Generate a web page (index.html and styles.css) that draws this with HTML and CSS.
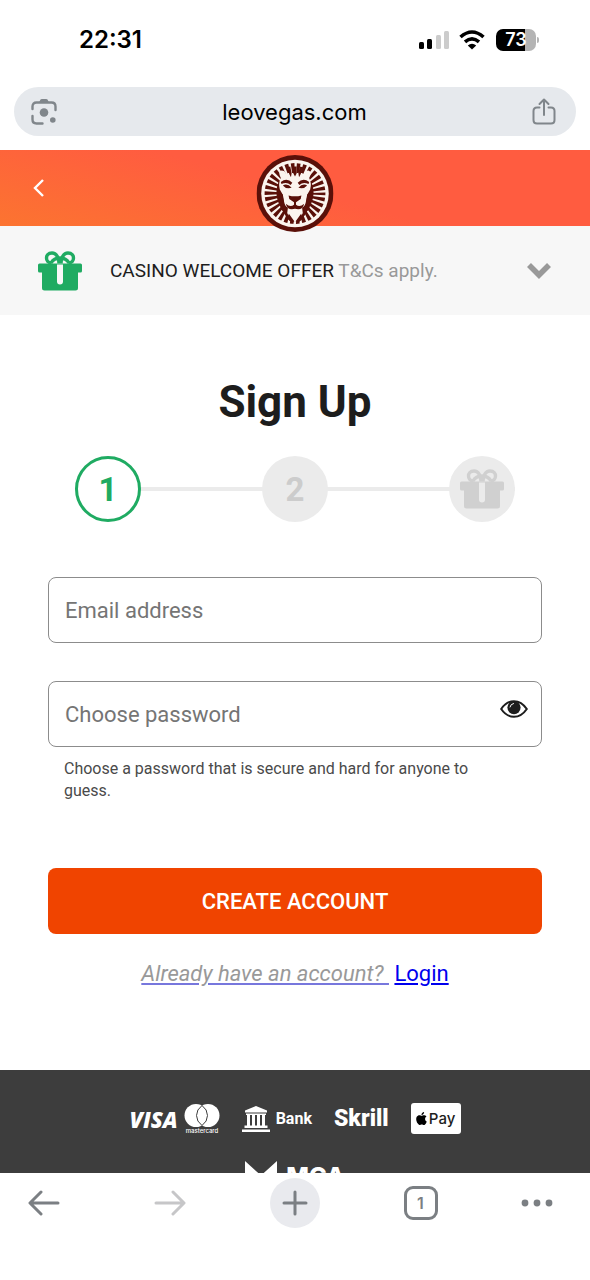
FILE: index.html
```html
<!DOCTYPE html>
<html lang="en">
<head>
    <meta charset="UTF-8">
    <meta name="viewport" content="width=device-width, initial-scale=1.0">
    <title>Sign Up</title>
    <link rel="stylesheet" href="styles.css">
</head>
<body>
    <!-- Shared gift icon -->
    <svg class="defs" aria-hidden="true">
        <symbol id="gift" viewBox="0 0 44 40">
            <path fill-rule="evenodd" d="M1.500 12.500H42.500Q44 12.500 44 14V20Q44 21.500 42.500 21.500H40V37Q40 39.500 37.500 39.500H6.500Q4 39.500 4 37V21.500H1.500Q0 21.500 0 20V14Q0 12.500 1.500 12.500ZM19 13.500V30.500Q19 33.500 22 33.500T25 30.500V13.500Z"/>
            <path fill="none" stroke="currentColor" stroke-width="3.400" d="M21 12.500C21 7 18.500 2 14 2C10 2 8.500 4.500 8.500 7C8.500 9.500 10 12 13.500 12M13 12C15 8.500 17.500 7 22 7C26.500 7 29 8.500 31 12M23 12.500C23 7 25.500 2 30 2C34 2 35.500 4.500 35.500 7C35.500 9.500 34 12 30.500 12"/>
        </symbol>
    </svg>

    <div class="status-bar">
        <span class="time">22:31</span>
        <div class="status-icons">
            <svg width="30" height="20" viewBox="0 0 30 20" aria-hidden="true">
                <rect x="0" y="12" width="5" height="7" rx="1.500"/>
                <rect x="8" y="9" width="5" height="10" rx="1.500"/>
                <rect x="17" y="5" width="5" height="14" rx="1.500" fill="#ccc"/>
                <rect x="25" y="1" width="5" height="18" rx="1.500" fill="#ccc"/>
            </svg>
            <svg width="26" height="20" viewBox="0 0 26 20" aria-hidden="true">
                <g fill="none" stroke="#000" stroke-width="3.600">
                    <path d="M1.500 7Q13-3 24.500 7"/>
                    <path d="M6 11.800Q13 5.800 20 11.800"/>
                </g>
                <path d="M13 19.500L8.800 15.400Q13 12 17.200 15.400Z"/>
            </svg>
            <span class="battery">73</span>
        </div>
    </div>

    <div class="address-bar">
        <button type="button" class="icon-btn" aria-label="Search with camera">
            <svg width="26" height="27" viewBox="0 0 26 27" aria-hidden="true">
                <g fill="none" stroke="#80868b" stroke-width="2.400" stroke-linecap="round">
                    <path d="M1.500 11V8.500Q1.500 4.500 5.500 4.500H20.500Q24.500 4.500 24.500 8.500V12"/>
                    <path d="M1.500 18V21.500Q1.500 25.500 5.500 25.500H11.500"/>
                </g>
                <path fill="#80868b" d="M8 4.500L9.500 1.500Q10 1 10.800 1H15.200Q16 1 16.500 1.500L18 4.500Z"/>
                <circle cx="13" cy="14.500" r="4.300" fill="#80868b"/>
                <circle cx="21.800" cy="22" r="2.800" fill="#80868b"/>
            </svg>
        </button>
        <span class="url">leovegas.com</span>
        <button type="button" class="icon-btn" aria-label="Share">
            <svg width="24" height="27" viewBox="0 0 24 27" aria-hidden="true">
                <g fill="none" stroke="#80868b" stroke-width="2" stroke-linecap="round" stroke-linejoin="round">
                    <path d="M7.500 9.500H5Q1.500 9.500 1.500 13V22Q1.500 25.500 5 25.500H19Q22.500 25.500 22.500 22V13Q22.500 9.500 19 9.500H16.500"/>
                    <path d="M12 17V1.500M7.500 6L12 1.500L16.500 6"/>
                </g>
            </svg>
        </button>
    </div>

    <div class="page">
        <header class="site-header">
            <a href="#" class="back" aria-label="Back">
                <svg width="12" height="20" viewBox="0 0 12 20" aria-hidden="true">
                    <path d="M10 2L2 10L10 18" fill="none" stroke="#fff" stroke-width="2.400"/>
                </svg>
            </a>
            <svg class="logo" viewBox="6 6 228 228" role="img" aria-label="LeoVegas">
                <circle cx="120" cy="120" r="114" fill="#5a1009"/>
                <circle cx="120" cy="120" r="100" fill="#fbf4ee"/>
                <circle cx="120" cy="120" r="68" fill="none" stroke="#5a1009" stroke-width="44" pathLength="60" stroke-dasharray="1.200 0.800" stroke-dashoffset="0.600"/>
                <path fill="#5a1009" d="M72 84Q58 118 72 150L92 186Q120 212 148 186L168 150Q182 118 168 84Z"/>
                <!-- Face -->
                <path fill="#fbf4ee" d="M78 74Q68 56 80 52Q90 52 94 62Q106 55 120 62Q134 55 146 62Q150 52 160 52Q172 56 162 74Q170 90 165 108L156 124L152 146Q150 158 141 162L143 178Q136 196 120 208Q104 196 97 178L99 162Q90 158 88 146L84 124L75 108Q70 90 78 74Z"/>
                <g fill="#5a1009">
                    <path d="M78 86Q96 72 112 88L107 95Q96 84 80 92ZM162 86Q144 72 128 88L133 95Q144 84 160 92Z"/>
                    <path d="M84 96Q98 89 110 103Q94 108 84 96ZM156 96Q142 89 130 103Q146 108 156 96Z"/>
                    <path d="M101 126Q120 131 139 126L137 136L123 146V153Q134 162 147 150Q143 171 120 165Q97 171 93 150Q106 162 117 153V146L103 136Z"/>
                    <path d="M72 116L83 122L88 152L96 163L95 184L78 166ZM168 116L157 122L152 152L144 163L145 184L162 166Z"/>
                    <path d="M102 180L118 202L112 208L96 194ZM138 180L122 202L128 208L144 194Z"/>
                    <path d="M115 40L116 62L120 70L124 62L125 40ZM96 42L103 62L108 72L110 60L106 40ZM144 42L137 62L132 72L130 60L134 40Z"/>
                </g>
            </svg>
        </header>

        <section class="offer">
            <svg class="offer-gift" aria-hidden="true"><use href="#gift"/></svg>
            <p class="offer-text">CASINO WELCOME OFFER <span class="terms">T&amp;Cs apply.</span></p>
            <button type="button" class="icon-btn" aria-label="Show offer details">
                <svg width="26" height="20" viewBox="0 0 26 20" aria-hidden="true">
                    <path d="M3 4L13 14L23 4" fill="none" stroke="#999" stroke-width="5.600"/>
                </svg>
            </button>
        </section>

        <main class="signup">
            <h1>Sign Up</h1>

            <ol class="steps">
                <li class="step active">1</li>
                <li class="step">2</li>
                <li class="step" aria-label="Gift"><svg class="step-gift" aria-hidden="true"><use href="#gift"/></svg></li>
            </ol>

            <form>
                <div class="form-group">
                    <input type="email" id="email" name="email" placeholder="Email address" aria-label="Email address">
                </div>

                <div class="form-group">
                    <input type="password" id="password" name="password" placeholder="Choose password" aria-label="Choose password" aria-describedby="hint">
                    <button type="button" class="icon-btn show-password" aria-label="Show password">
                        <svg width="28" height="18" viewBox="0 0 28 18" aria-hidden="true">
                            <path d="M1.200 9Q6.500 1.200 14 1.200T26.800 9Q21.500 16.800 14 16.800T1.200 9Z" fill="#fff" stroke="#1d1d1d" stroke-width="2"/>
                            <circle cx="14" cy="7.600" r="6.600" fill="#1d1d1d"/>
                            <path d="M10 7Q10.500 4 13.500 3.500" fill="none" stroke="#fff" stroke-width="1" stroke-linecap="round"/>
                        </svg>
                    </button>
                </div>
                <p class="hint" id="hint">Choose a password that is secure and hard for anyone to guess.</p>

                <button type="submit" class="btn">CREATE ACCOUNT</button>
            </form>

            <p class="login"><a href="#" class="question">Already have an account?&nbsp;</a> <a href="#">Login</a></p>
        </main>

        <footer class="site-footer">
            <div class="payments">
                <div class="cards">
                    <span class="visa">VISA</span>
                    <svg width="36" height="30" viewBox="0 0 36 30" role="img" aria-label="mastercard">
                        <circle cx="12" cy="11.500" r="11.500" fill="#fff"/>
                        <circle cx="24" cy="11.500" r="11.500" fill="#fff"/>
                        <path d="M18 1.500Q12.500 5.500 12.500 11.500T18 21.500Q23.500 17.500 23.500 11.500T18 1.500Z" fill="#fff" stroke="#3d3d3d" stroke-width="1"/>
                        <text x="18" y="28.500" class="mc-text">mastercard</text>
                    </svg>
                </div>
                <div class="bank">
                    <svg width="28" height="26" viewBox="0 0 28 26" fill="#fff" aria-hidden="true">
                        <path d="M14 0L25 4.500V6.500H3V4.500ZM4 7.500H24V9H4ZM5 9H8V20H5ZM10 9H13V20H10ZM15 9H18V20H15ZM20 9H23V20H20ZM2.500 19.500H25.500V22H2.500ZM0 23.500H28V26H0Z"/>
                    </svg>
                    <span>Bank</span>
                </div>
                <span class="skrill">Skrill</span>
                <span class="apple-pay">
                    <svg width="11" height="13" viewBox="2 0 20 24" aria-label="Apple" role="img">
                        <path d="M12.152 6.896c-.948 0-2.415-1.078-3.960-1.040-2.040.027-3.910 1.183-4.961 3.014-2.117 3.675-.546 9.103 1.519 12.090 1.013 1.454 2.208 3.090 3.792 3.039 1.520-.065 2.090-.987 3.935-.987 1.831 0 2.350.987 3.960.948 1.637-.026 2.676-1.480 3.676-2.948 1.156-1.688 1.636-3.325 1.662-3.415-.039-.013-3.182-1.221-3.220-4.857-.026-3.040 2.480-4.494 2.597-4.559-1.429-2.090-3.623-2.324-4.390-2.376-2-.156-3.675 1.090-4.610 1.090zM15.530 3.830c.843-1.012 1.400-2.427 1.245-3.830-1.207.052-2.662.805-3.532 1.818-.780.896-1.454 2.338-1.273 3.714 1.338.104 2.715-.688 3.559-1.701"/>
                    </svg>
                    Pay
                </span>
            </div>
            <div class="mga">
                <svg width="32" height="32" viewBox="0 0 32 32" aria-hidden="true">
                    <path d="M0 0L16 14.500L32 0V32H22V20L16 26L10 20V32H0Z" fill="#fff"/>
                </svg>
                <span>MGA</span>
            </div>
        </footer>
    </div>

    <nav class="toolbar">
        <button type="button" aria-label="Back">
            <svg width="32" height="26" viewBox="0 0 32 26" aria-hidden="true">
                <path d="M30 13H2.500M13 2L2 13L13 24" fill="none" stroke="#7b7f83" stroke-width="3" stroke-linecap="round" stroke-linejoin="round"/>
            </svg>
        </button>
        <button type="button" aria-label="Forward" disabled>
            <svg width="32" height="26" viewBox="0 0 32 26" aria-hidden="true">
                <path d="M2 13H29.500M19 2L30 13L19 24" fill="none" stroke="#c6c6c8" stroke-width="3" stroke-linecap="round" stroke-linejoin="round"/>
            </svg>
        </button>
        <button type="button" class="new-tab" aria-label="New tab">
            <svg width="26" height="26" viewBox="0 0 26 26" aria-hidden="true">
                <path d="M13 2V24M2 13H24" fill="none" stroke="#7b7f83" stroke-width="3" stroke-linecap="round"/>
            </svg>
        </button>
        <button type="button" aria-label="Tabs"><span class="tab-count">1</span></button>
        <button type="button" class="more" aria-label="More">
            <svg width="32" height="8" viewBox="0 0 32 8" fill="#7b7f83" aria-hidden="true">
                <circle cx="4" cy="4" r="3.400"/>
                <circle cx="16" cy="4" r="3.400"/>
                <circle cx="28" cy="4" r="3.400"/>
            </svg>
        </button>
    </nav>
</body>
</html>
```

FILE: styles.css
```css
* {
    margin: 0;
    padding: 0;
    box-sizing: border-box;
}

body {
    display: flex;
    flex-direction: column;
    height: 100vh;
    font-family: Roboto, Arial, sans-serif;
    color: #1d1d1d;
    background: #fff;
}

svg {
    display: block;
    flex-shrink: 0;
}

button {
    font-family: inherit;
    border: none;
    background: none;
    cursor: pointer;
}

.defs {
    position: absolute;
    width: 0;
    height: 0;
}

/* Phone status bar */
.status-bar {
    display: flex;
    justify-content: space-between;
    align-items: center;
    padding: 24px 54px 0 79px;
    margin-bottom: 31px;
    font-family: Inter, sans-serif;
    color: #000;
}

.time {
    font-size: 24px;
    line-height: 32px;
    font-weight: 600;
}

.status-icons {
    display: flex;
    align-items: center;
    gap: 10px;
}

.battery {
    position: relative;
    width: 40px;
    height: 22px;
    margin-left: 1px;
    border-radius: 7px;
    background: linear-gradient(to right, #000 73%, #b4b4b4 73%);
    color: #fff;
    font-size: 18px;
    line-height: 22px;
    font-weight: 600;
    text-align: center;
}

.battery::after {
    content: '';
    position: absolute;
    right: -3px;
    top: 8px;
    width: 2px;
    height: 6px;
    border-radius: 0 2px 2px 0;
    background: #b4b4b4;
}

/* Browser address bar */
.address-bar {
    display: flex;
    justify-content: space-between;
    align-items: center;
    height: 49px;
    margin: 0 14px 14px;
    padding: 0 20px 0 17px;
    border-radius: 25px;
    background: #e6e9ed;
    color: #000;
}

.url {
    font-family: Inter, sans-serif;
    font-size: 22px;
    line-height: 28px;
}

/* Web page */
.page {
    flex: 1;
    min-height: 0;
    overflow: hidden;
}

.site-header {
    position: relative;
    display: flex;
    align-items: center;
    height: 76px;
    padding: 0 33px;
    background: linear-gradient(15deg, #fc7430, #ff5c40 50%);
}

.logo {
    position: absolute;
    top: 5px;
    left: 50%;
    width: 77px;
    height: 77px;
    transform: translateX(-50%);
}

.offer {
    display: flex;
    align-items: center;
    height: 89px;
    padding: 0 38px;
    background: #f7f7f7;
}

.offer-gift,
.step-gift {
    width: 44px;
    height: 40px;
    color: #1fab62;
    fill: currentColor;
}

.offer-text {
    flex: 1;
    margin-left: 28px;
    font-size: 19px;
    line-height: 28px;
}

.terms {
    color: #999;
}

.signup {
    padding: 61px 48px 82px;
}

.signup h1 {
    margin-bottom: 28px;
    font-size: 44px;
    line-height: 52px;
    font-weight: 700;
    text-align: center;
}

.steps {
    display: flex;
    justify-content: space-between;
    margin: 0 27px 55px;
    list-style: none;
    background: linear-gradient(#ebebeb, #ebebeb) center / 100% 4px no-repeat;
}

.step {
    display: flex;
    justify-content: center;
    align-items: center;
    width: 66px;
    height: 66px;
    border-radius: 50%;
    background: #ebebeb;
    color: #ccc;
    font-size: 33px;
    font-weight: 700;
}

.step.active {
    border: 3px solid #1fab62;
    background: #fff;
    color: #1fab62;
}

.step-gift {
    color: #d0d0d0;
}

.form-group {
    position: relative;
    margin-bottom: 38px;
}

.form-group input {
    display: block;
    width: 100%;
    height: 66px;
    padding: 0 16px;
    border: 1px solid #8c8c8c;
    border-radius: 8px;
    background: #fff;
    font-family: inherit;
    font-size: 22px;
}

.form-group input::placeholder {
    color: #757575;
}

.show-password {
    position: absolute;
    top: 19px;
    right: 14px;
}

.hint {
    margin: -27px 48px 66px 16px;
    color: #4a4a4a;
    font-size: 16px;
    line-height: 22px;
}

.btn {
    width: 100%;
    height: 66px;
    border-radius: 8px;
    background: #f04400;
    color: #fff;
    font-size: 22px;
    font-weight: 500;
}

.login {
    margin-top: 26px;
    font-size: 22px;
    line-height: 28px;
    text-align: center;
}

.login a {
    color: #0000ee;
}

.login .question {
    color: #999;
    font-style: italic;
    text-decoration-color: #7777dd;
}

.site-footer {
    padding: 33px 48px;
    background: #3d3d3d;
    color: #fff;
}

.payments {
    display: flex;
    justify-content: center;
    align-items: center;
    gap: 22px;
}

.cards,
.bank {
    display: flex;
    align-items: center;
    gap: 6px;
}

.visa {
    font-family: "Open Sans", sans-serif;
    font-size: 22px;
    line-height: 28px;
    font-weight: 800;
    font-style: italic;
}

.mc-text {
    fill: #fff;
    font-family: Inter, sans-serif;
    font-size: 6px;
    font-weight: 500;
    text-anchor: middle;
}

.bank {
    font-size: 16px;
    font-weight: 700;
}

.skrill {
    font-size: 23px;
    line-height: 28px;
    font-weight: 900;
}

.apple-pay {
    display: flex;
    justify-content: center;
    align-items: center;
    gap: 2px;
    width: 50px;
    height: 31px;
    border-radius: 3px;
    background: #fff;
    color: #1d1d1d;
    font-family: Inter, sans-serif;
    font-size: 15px;
    font-weight: 500;
}

.mga {
    display: flex;
    justify-content: center;
    gap: 9px;
    margin-top: 27px;
    font-family: Inter, sans-serif;
    font-size: 24px;
    line-height: 32px;
    font-weight: 800;
}

/* Browser toolbar */
.toolbar {
    display: flex;
    justify-content: space-between;
    padding: 5px 19px 52px;
    background: #fff;
}

.toolbar button {
    display: flex;
    justify-content: center;
    align-items: center;
    width: 50px;
    height: 50px;
}

.toolbar .new-tab {
    border-radius: 50%;
    background: #e9eaee;
}

.toolbar .more {
    justify-content: flex-start;
}

.tab-count {
    width: 34px;
    height: 34px;
    border: 3px solid #7b7f83;
    border-radius: 9px;
    color: #7b7f83;
    font-family: Inter, sans-serif;
    font-size: 16px;
    line-height: 28px;
    font-weight: 600;
}
```
